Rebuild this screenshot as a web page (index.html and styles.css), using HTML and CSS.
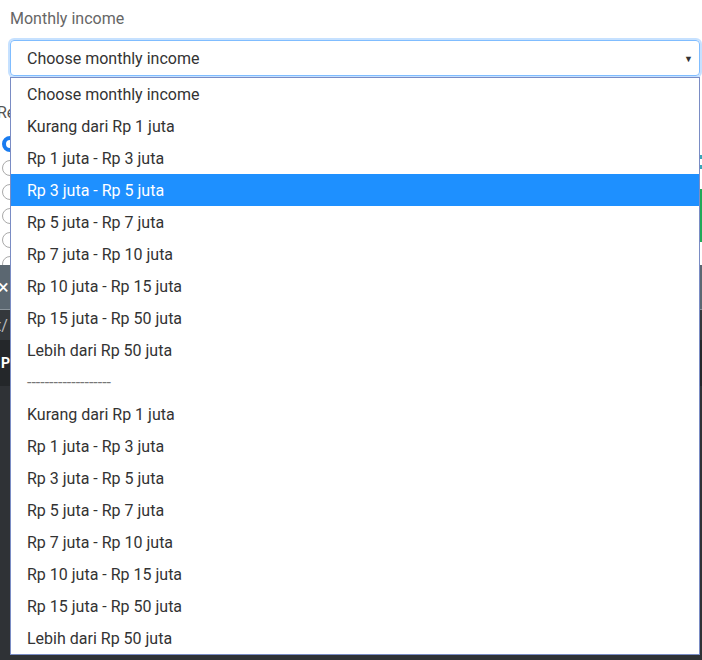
FILE: index.html
```html
<!DOCTYPE html>
<html>
<head>
<meta charset="utf-8">
<link rel="stylesheet" href="styles.css">
</head>
<body>
<div class="page">
  <div class="top">
    <div class="label">Monthly income</div>
    <div class="select">
      <span class="select-text">Choose monthly income</span>
      <span class="caret">▼</span>
    </div>
    <div class="side">
      <div class="side-label">Re</div>
      <div class="radio checked"></div>
      <div class="radio"></div>
      <div class="radio"></div>
      <div class="radio"></div>
      <div class="radio"></div>
      <div class="radio"></div>
    </div>
    <div class="right-edge">
      <div class="teal"></div>
      <div class="teal"></div>
      <div class="green"></div>
    </div>
  </div>
  <div class="dark">
    <div class="band band-gray"><span class="close">×</span></div>
    <div class="band band-url"><span class="url">t/</span></div>
    <div class="band band-p"><span class="p">P</span></div>
    <div class="band band-rest"></div>
    <div class="bottom-text">orientasi strategis sebaik</div>
  </div>

  <ul class="popup">
    <li>Choose monthly income</li>
    <li>Kurang dari Rp 1 juta</li>
    <li>Rp 1 juta - Rp 3 juta</li>
    <li class="active">Rp 3 juta - Rp 5 juta</li>
    <li>Rp 5 juta - Rp 7 juta</li>
    <li>Rp 7 juta - Rp 10 juta</li>
    <li>Rp 10 juta - Rp 15 juta</li>
    <li>Rp 15 juta - Rp 50 juta</li>
    <li>Lebih dari Rp 50 juta</li>
    <li class="sep">-------------------</li>
    <li>Kurang dari Rp 1 juta</li>
    <li>Rp 1 juta - Rp 3 juta</li>
    <li>Rp 3 juta - Rp 5 juta</li>
    <li>Rp 5 juta - Rp 7 juta</li>
    <li>Rp 7 juta - Rp 10 juta</li>
    <li>Rp 10 juta - Rp 15 juta</li>
    <li>Rp 15 juta - Rp 50 juta</li>
    <li>Lebih dari Rp 50 juta</li>
  </ul>
</div>
</body>
</html>
```
FILE: styles.css
```css
* { box-sizing: border-box; }
html, body { margin: 0; padding: 0; }
body {
  font-family: Roboto, "Liberation Sans", sans-serif;
  background: #fff;
}
.page {
  position: relative;
  width: 702px;
  height: 660px;
  overflow: hidden;
}
.top {
  position: relative;
  height: 265px;
  padding: 9px 2px 0 10px;
  background: #fff;
}
.label {
  font-size: 16px;
  line-height: 20px;
  color: #666;
}
.select {
  margin-top: 11px;
  height: 36px;
  border: 1px solid #80bdff;
  border-radius: 4px;
  box-shadow: 0 0 0 2px rgba(128, 189, 255, 0.45);
  display: flex;
  align-items: center;
  justify-content: space-between;
  padding: 0 6px 0 16px;
  color: #333;
  font-size: 16px;
}
.caret {
  font-size: 9px;
  color: #333;
  margin-top: 1px;
}
.side {
  margin-left: -13px;
  margin-top: 29px;
  display: flex;
  flex-direction: column;
  gap: 8px;
}
.side-label {
  font-size: 16px;
  line-height: 16px;
  color: #555;
  margin-bottom: 7px;
}
.radio {
  width: 16px;
  height: 16px;
  border-radius: 50%;
  border: 1px solid #aaa;
  background: #fff;
  margin-left: 5px;
}
.radio.checked {
  border: 4px solid #1a7cf0;
}
.right-edge {
  position: absolute;
  left: 700px;
  top: 155px;
  width: 2px;
  display: flex;
  flex-direction: column;
  gap: 6px;
}
.teal {
  width: 2px;
  height: 4px;
  background: #3aa6b9;
}
.green {
  margin-top: 14px;
  height: 53px;
  background: #1faa59;
}
.dark {
  height: 395px;
  background: #2d3034;
  display: flex;
  flex-direction: column;
  position: relative;
}
.band { display: flex; align-items: center; }
.band-gray {
  height: 45px;
  background: #5b6771;
  border-bottom: 1px solid #8a949c;
}
.close {
  color: #fff;
  font-size: 20px;
  margin-left: -2px;
}
.band-url {
  height: 30px;
  background: #34383c;
}
.url {
  color: #b8bcc0;
  font-size: 16px;
  margin-left: -4px;
}
.band-p {
  height: 46px;
  background: #24272a;
}
.p {
  color: #fff;
  font-weight: bold;
  font-size: 14px;
  margin-left: 1px;
}
.band-rest {
  flex: 1;
  background: #2f3236;
}
.bottom-text {
  position: absolute;
  left: 262px;
  bottom: -16px;
  color: #ddd;
  font-size: 16px;
}
.popup {
  position: absolute;
  top: 77px;
  left: 10px;
  width: 690px;
  margin: 0;
  padding: 0;
  list-style: none;
  background: #fff;
  border: 1px solid #7a8cc4;
}
.popup li {
  height: 32px;
  line-height: 30px;
  padding: 2px 0 0 16px;
  font-size: 16px;
  color: #333;
}
.popup li.active {
  background: #1e90ff;
  color: #fff;
}
.popup li.sep {
  color: #777;
}
```
